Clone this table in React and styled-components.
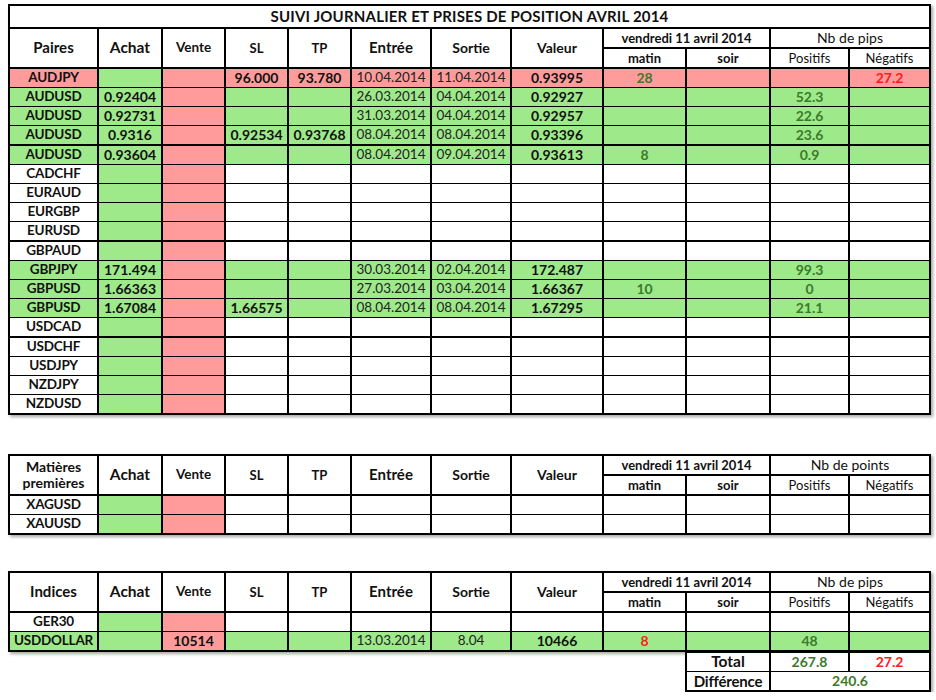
import React from 'react';
import styled, { createGlobalStyle } from 'styled-components';

const GlobalStyle = createGlobalStyle`
  body {
    margin: 0;
    background: #fff;
    font-family: Lato, "Open Sans", sans-serif;
    color: #111;
  }
`;

const COLS = [89, 64, 63, 63, 63, 80, 80, 92, 83, 84, 79, 81];

const FILL = {
  green: '#9eea8a',
  red: '#ff9b9b',
  white: '#fff',
};

const Sheet = styled.div`
  padding: 4px 0 0 8px;
`;

const Grid = styled.table`
  border-collapse: collapse;
  table-layout: fixed;
  width: 921px;
  border: 2px solid #000;
  box-shadow: 2px 2px 3px rgba(0, 0, 0, 0.35);
  margin-bottom: ${p => p.$gap || 0}px;
`;

const TotalsGrid = styled(Grid)`
  width: 244px;
  margin-left: 677px;
  border-top: none;
`;

const Cell = styled.td`
  border-left: 2px solid #000;
  border-right: 2px solid #000;
  border-top: ${p => (p.$thickTop ? 2 : 1)}px solid #000;
  border-bottom: ${p => (p.$thickBottom ? 2 : 1)}px solid #000;
  background: ${p => FILL[p.$fill || 'white']};
  color: ${p => p.$color || '#111'};
  font-weight: ${p => (p.$light ? 400 : 700)};
  font-size: ${p => p.$size || 14}px;
  letter-spacing: ${p => p.$track || 0}px;
  text-align: center;
  padding: 0;
  height: ${p => p.$h || 18}px;
  line-height: 1;
  white-space: nowrap;
  overflow: hidden;
`;

const HeadCell = styled(Cell).attrs({ as: 'th' })`
  border-bottom: 2px solid #000;
  line-height: 1.15;
`;

const TitleCell = styled(Cell).attrs({ as: 'th' })`
  border-bottom: 2px solid #000;
  font-size: 15px;
  height: 21px;
  letter-spacing: 0.2px;
`;

const GroupCell = styled(Cell).attrs({ as: 'th' })`
  border-bottom: 2px solid #000;
  height: 18px;
`;

const SubCell = styled(GroupCell)`
  border-top: 1px solid #000;
`;

const GREEN_TEXT = '#3b7a2a';
const RED_TEXT = '#ff1a1a';

const Columns = ({ widths }) => (
  <colgroup>
    {widths.map((w, i) => (
      <col key={i} style={{ width: w }} />
    ))}
  </colgroup>
);

const Header = ({ first, firstSize = 15, unit, title }) => (
  <thead>
    {title && (
      <tr>
        <TitleCell colSpan={12}>{title}</TitleCell>
      </tr>
    )}
    <tr>
      <HeadCell rowSpan={2} $size={firstSize}>{first}</HeadCell>
      <HeadCell rowSpan={2} $size={15.5}>Achat</HeadCell>
      <HeadCell rowSpan={2} $size={13.5}>Vente</HeadCell>
      <HeadCell rowSpan={2} $size={13}>SL</HeadCell>
      <HeadCell rowSpan={2} $size={13}>TP</HeadCell>
      <HeadCell rowSpan={2} $size={15}>Entrée</HeadCell>
      <HeadCell rowSpan={2} $size={14}>Sortie</HeadCell>
      <HeadCell rowSpan={2} $size={14}>Valeur</HeadCell>
      <GroupCell colSpan={2} $size={13}>vendredi 11 avril 2014</GroupCell>
      <GroupCell colSpan={2} $size={14} $light>{unit}</GroupCell>
    </tr>
    <tr>
      <SubCell $size={13}>matin</SubCell>
      <SubCell $size={13}>soir</SubCell>
      <SubCell $size={13} $light>Positifs</SubCell>
      <SubCell $size={13} $light>Négatifs</SubCell>
    </tr>
  </thead>
);

// kind: plain (white row), green (open trade), red (losing trade)
const fills = kind => {
  const base = kind === 'plain' ? 'white' : kind;
  return { pair: base, achat: 'green', vente: 'red', rest: base };
};

const Row = ({ r }) => {
  const f = fills(r.kind);
  const t = r.thick;
  return (
    <tr>
      <Cell $fill={f.pair} $thickTop={t} $size={13.5} $track={-0.2}>{r.pair}</Cell>
      <Cell $fill={f.achat} $thickTop={t}>{r.achat}</Cell>
      <Cell $fill={f.vente} $thickTop={t}>{r.vente}</Cell>
      <Cell $fill={f.rest} $thickTop={t}>{r.sl}</Cell>
      <Cell $fill={f.rest} $thickTop={t}>{r.tp}</Cell>
      <Cell $fill={f.rest} $thickTop={t} $light $size={13.5} $color="#222">{r.entree}</Cell>
      <Cell $fill={f.rest} $thickTop={t} $light $size={13.5} $color="#222">{r.sortie}</Cell>
      <Cell $fill={f.rest} $thickTop={t}>{r.valeur}</Cell>
      <Cell $fill={f.rest} $thickTop={t} $color={r.matinRed ? RED_TEXT : GREEN_TEXT}>
        {r.matin}
      </Cell>
      <Cell $fill={f.rest} $thickTop={t}>{r.soir}</Cell>
      <Cell $fill={f.rest} $thickTop={t} $color={GREEN_TEXT}>{r.pos}</Cell>
      <Cell $fill={f.rest} $thickTop={t} $color={RED_TEXT}>{r.neg}</Cell>
    </tr>
  );
};

const paires = [
  {
    kind: 'red', pair: 'AUDJPY', sl: '96.000', tp: '93.780', entree: '10.04.2014',
    sortie: '11.04.2014', valeur: '0.93995', matin: '28', neg: '27.2',
  },
  {
    kind: 'green', pair: 'AUDUSD', achat: '0.92404', entree: '26.03.2014',
    sortie: '04.04.2014', valeur: '0.92927', pos: '52.3',
  },
  {
    kind: 'green', pair: 'AUDUSD', achat: '0.92731', entree: '31.03.2014',
    sortie: '04.04.2014', valeur: '0.92957', pos: '22.6',
  },
  {
    kind: 'green', pair: 'AUDUSD', achat: '0.9316', sl: '0.92534', tp: '0.93768',
    entree: '08.04.2014', sortie: '08.04.2014', valeur: '0.93396', pos: '23.6',
  },
  {
    kind: 'green', pair: 'AUDUSD', achat: '0.93604', entree: '08.04.2014',
    sortie: '09.04.2014', valeur: '0.93613', matin: '8', pos: '0.9', thick: true,
  },
  { kind: 'plain', pair: 'CADCHF' },
  { kind: 'plain', pair: 'EURAUD' },
  { kind: 'plain', pair: 'EURGBP' },
  { kind: 'plain', pair: 'EURUSD' },
  { kind: 'plain', pair: 'GBPAUD', thick: true },
  {
    kind: 'green', pair: 'GBPJPY', achat: '171.494', entree: '30.03.2014',
    sortie: '02.04.2014', valeur: '172.487', pos: '99.3',
  },
  {
    kind: 'green', pair: 'GBPUSD', achat: '1.66363', entree: '27.03.2014',
    sortie: '03.04.2014', valeur: '1.66367', matin: '10', pos: '0',
  },
  {
    kind: 'green', pair: 'GBPUSD', achat: '1.67084', sl: '1.66575',
    entree: '08.04.2014', sortie: '08.04.2014', valeur: '1.67295', pos: '21.1',
  },
  { kind: 'plain', pair: 'USDCAD' },
  { kind: 'plain', pair: 'USDCHF', thick: true },
  { kind: 'plain', pair: 'USDJPY' },
  { kind: 'plain', pair: 'NZDJPY' },
  { kind: 'plain', pair: 'NZDUSD' },
];

const matieres = [
  { kind: 'plain', pair: 'XAGUSD' },
  { kind: 'plain', pair: 'XAUUSD' },
];

const indices = [
  { kind: 'plain', pair: 'GER30' },
  {
    kind: 'green', pair: 'USDDOLLAR', vente: '10514', entree: '13.03.2014',
    sortie: '8.04', valeur: '10466', matin: '8', matinRed: true, pos: '48',
  },
];

const Totals = () => (
  <TotalsGrid>
    <Columns widths={[84, 79, 81]} />
    <tbody>
      <tr>
        <Cell $h={18} $size={15.5}>Total</Cell>
        <Cell $h={18} $color={GREEN_TEXT}>267.8</Cell>
        <Cell $h={18} $color={RED_TEXT}>27.2</Cell>
      </tr>
      <tr>
        <Cell $h={18} $size={15} $track={-0.2}>Différence</Cell>
        <Cell $h={18} colSpan={2} $color={GREEN_TEXT}>240.6</Cell>
      </tr>
    </tbody>
  </TotalsGrid>
);

const App = () => (
  <Sheet>
    <GlobalStyle />
    <Grid $gap={39}>
      <Columns widths={COLS} />
      <Header
        first="Paires"
        unit="Nb de pips"
        title="SUIVI JOURNALIER ET PRISES DE POSITION AVRIL 2014"
      />
      <tbody>
        {paires.map((r, i) => (
          <Row key={i} r={r} />
        ))}
      </tbody>
    </Grid>

    <Grid $gap={36}>
      <Columns widths={COLS} />
      <Header
        first={
          <>
            Matières
            <br />
            premières
          </>
        }
        firstSize={14}
        unit="Nb de points"
      />
      <tbody>
        {matieres.map((r, i) => (
          <Row key={i} r={r} />
        ))}
      </tbody>
    </Grid>

    <Grid>
      <Columns widths={COLS} />
      <Header first="Indices" unit="Nb de pips" />
      <tbody>
        {indices.map((r, i) => (
          <Row key={i} r={r} />
        ))}
      </tbody>
    </Grid>
    <Totals />
  </Sheet>
);

export default App;
